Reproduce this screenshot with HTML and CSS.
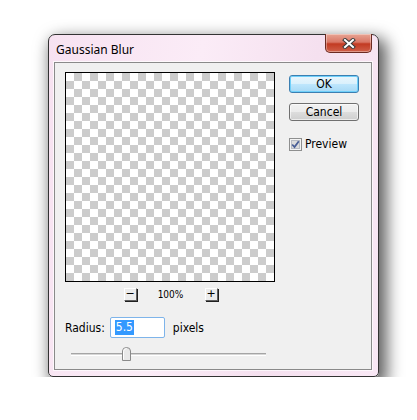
FILE: index.html
```html
<!DOCTYPE html>
<html lang="en">
  <head>
    <meta charset="utf-8">
    <title>Gaussian Blur</title>
    <link rel="stylesheet" href="styles.css">
  </head>
  <body>
    <div id="stage">
      <div id="dialog">
        <div id="title-bar">
          <span id="title">Gaussian Blur</span>
          <div id="close-button">
            <svg width="14" height="11" viewBox="0 0 14 11">
              <path d="M3 2 L11 9 M11 2 L3 9" stroke="#3a3a3a" stroke-width="4" stroke-linecap="square"/>
              <path d="M3 2 L11 9 M11 2 L3 9" stroke="#ffffff" stroke-width="2" stroke-linecap="square"/>
            </svg>
          </div>
        </div>
        <div id="client">
          <div id="left-column">
            <div id="preview"></div>
            <div id="zoom-row">
              <span class="zoom-btn">&minus;</span>
              <span id="zoom-value">100%</span>
              <span class="zoom-btn">+</span>
            </div>
            <div id="radius-row">
              <span class="label">Radius:</span>
              <span id="radius-input"><span id="selection">5.5</span></span>
              <span class="label">pixels</span>
            </div>
            <div id="slider">
              <div id="slider-track"></div>
              <svg id="slider-thumb" width="11" height="14" viewBox="0 0 11 14">
                <path d="M1.5 13.5 V4 Q1.5 0.5 5.5 0.5 Q9.5 0.5 9.5 4 V13.5 Z" fill="#e9e9e9" stroke="#8a8a8a"/>
                <path d="M2.5 12.5 V4.5 Q2.5 1.5 5.5 1.5" fill="none" stroke="#ffffff"/>
              </svg>
            </div>
          </div>
          <div id="right-column">
            <div class="button default">OK</div>
            <div class="button">Cancel</div>
            <div id="preview-check">
              <svg width="13" height="13" viewBox="0 0 13 13">
                <rect x="0.5" y="0.5" width="12" height="12" fill="#f4f4f4" stroke="#8e8f8f"/>
                <rect x="2.5" y="2.5" width="8" height="8" fill="#dcdcdc" stroke="#b8bcc4"/>
                <path d="M3.2 6.5 L5.5 9 L9.8 3.2" fill="none" stroke="#4a5f97" stroke-width="1.8"/>
              </svg>
              <span class="label">Preview</span>
            </div>
          </div>
        </div>
      </div>
    </div>
  </body>
</html>
```

FILE: styles.css
```css
body {
  margin: 0;
  background: white;
  font-family: "DejaVu Sans Condensed", "DejaVu Sans", sans-serif;
  font-stretch: condensed;
  color: #000;
}
#stage {
  padding: 34px 0 0 48px;
}
#dialog {
  width: 331px;
  height: 343px;
  box-sizing: border-box;
  border: 1px solid #333;
  border-radius: 7px 7px 5px 5px;
  background: linear-gradient(100deg, #f7e2f1 0%, #fbecf7 40%, #f5e0ef 70%, #f9e8f5 100%);
  box-shadow: 5px 7px 16px 3px rgba(0, 0, 0, 0.62);
  display: flex;
  flex-direction: column;
}
#title-bar {
  height: 27px;
  display: flex;
  align-items: center;
  padding-left: 7px;
  padding-right: 6px;
}
#title {
  font-family: "Noto Sans", sans-serif;
  font-stretch: normal;
  font-size: 12px;
  color: #000;
  margin-top: 2px;
}
#close-button {
  margin-left: auto;
  align-self: flex-start;
  margin-top: -1px;
  width: 47px;
  height: 19px;
  box-sizing: border-box;
  border: 1px solid #6b2a22;
  border-top: none;
  border-radius: 0 0 5px 5px;
  background: linear-gradient(#e8a493 0%, #d97766 45%, #c23a22 55%, #d0604a 100%);
  box-shadow: inset 0 0 0 1px rgba(255, 255, 255, 0.35);
  display: flex;
  align-items: center;
  justify-content: center;
}
#client {
  flex: 1;
  margin: 0 6px 6px 5px;
  border: 1px solid #8a8a8a;
  box-shadow: 0 0 0 1px rgba(255, 255, 255, 0.7);
  background: #f0f0f0;
  display: flex;
  padding: 9px 0 0 10px;
}
#left-column {
  width: 210px;
  display: flex;
  flex-direction: column;
}
#preview {
  width: 210px;
  height: 210px;
  box-sizing: border-box;
  border: 1px solid #000;
  background-color: #fff;
  background-image: conic-gradient(#cccccc 25%, #ffffff 0 50%, #cccccc 0 75%, #ffffff 0);
  background-size: 16px 16px;
}
#zoom-row {
  margin-top: 6px;
  display: flex;
  justify-content: center;
  align-items: center;
  gap: 21px;
  padding-left: 1px;
}
.zoom-btn {
  width: 13px;
  height: 13px;
  box-sizing: border-box;
  border: 1px solid;
  border-color: #ffffff #606060 #606060 #ffffff;
  box-shadow: 1px 1px 0 #202020;
  background: #ececec;
  font-size: 11px;
  line-height: 10px;
  text-align: center;
  font-family: "DejaVu Sans", sans-serif;
  font-stretch: normal;
}
#zoom-value {
  font-size: 10px;
  width: 26px;
  text-align: center;
}
#radius-row {
  margin-top: 16px;
  display: flex;
  align-items: center;
  height: 21px;
}
.label {
  font-size: 12px;
}
#radius-input {
  margin: 0 8px 0 5px;
  width: 55px;
  height: 21px;
  box-sizing: border-box;
  border: 1px solid #7eb4ea;
  border-radius: 2px;
  background: #fff;
  display: flex;
  align-items: center;
  padding-left: 4px;
}
#selection {
  background: #3399ff;
  color: #fff;
  font-size: 12px;
  line-height: 15px;
  padding: 0 1px;
}
#slider {
  position: relative;
  margin-top: 9px;
  height: 12px;
}
#slider-track {
  margin: 6px 0 0 6px;
  width: 195px;
  height: 1px;
  border-top: 1px solid #a5a5a5;
  border-bottom: 1px solid #ffffff;
  background: #d6d6d6;
}
#slider-thumb {
  position: absolute;
  left: 56px;
  top: 0;
}
#right-column {
  margin-left: 14px;
  padding-top: 3px;
  display: flex;
  flex-direction: column;
}
.button {
  width: 70px;
  height: 18px;
  box-sizing: border-box;
  border: 1px solid #707070;
  border-radius: 3px;
  background: linear-gradient(#f2f2f2 0%, #ebebeb 50%, #dddddd 51%, #cfcfcf 100%);
  box-shadow: inset 0 0 0 1px rgba(255, 255, 255, 0.6);
  font-size: 12px;
  line-height: 16px;
  text-align: center;
  margin-bottom: 10px;
}
.button.default {
  border-color: #3c7fb1;
  background: linear-gradient(#eaf6fd 0%, #d9f0fc 50%, #bee6fd 51%, #a7d9f5 100%);
  box-shadow: inset 0 0 0 1px #6fd0fa;
}
#preview-check {
  margin-top: 6px;
  display: flex;
  align-items: center;
  gap: 3px;
}
```
